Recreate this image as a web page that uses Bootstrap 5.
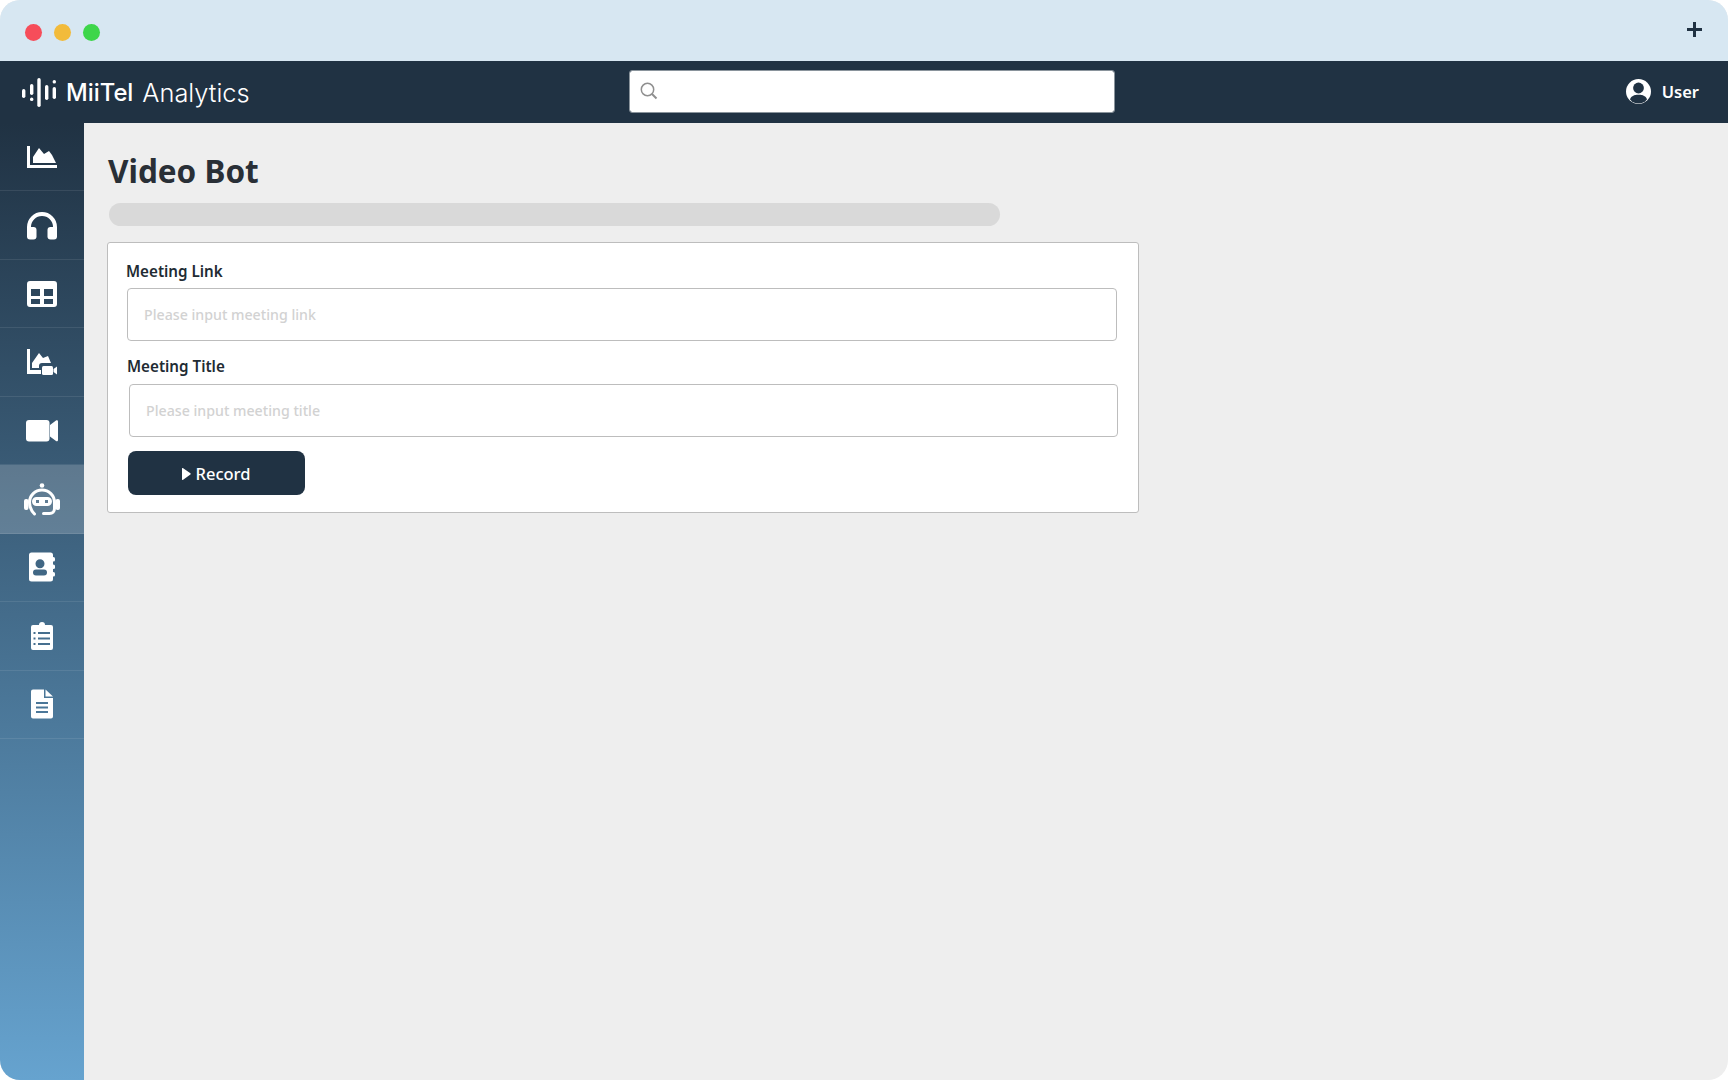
<!doctype html>
<html lang="en">
<head>
    <meta charset="utf-8">
    <meta name="viewport" content="width=device-width, initial-scale=1">
    <title>Video Bot</title>
    <link href="https://cdn.jsdelivr.net/npm/bootstrap@5.3.3/dist/css/bootstrap.min.css" rel="stylesheet">
    <style>
        html, body { height: 100%; background: #fff; }
        body { font-family: "Noto Sans", sans-serif; color: #212b33; overflow: hidden; }
        .app-window { height: 1080px; border-radius: 20px; overflow: hidden; background: #eee; }

        /* browser strip */
        .title-strip { height: 61px; flex: none; background: #d7e7f2; padding: 0 26px 0 25px; }
        .traffic-dot { width: 17px; height: 17px; border-radius: 50%; margin-right: 12px; margin-top: 3px; }
        .dot-red { background: #f64d5a; }
        .dot-yellow { background: #f2bb3b; }
        .dot-green { background: #3dd64a; }
        .strip-plus { margin-top: -3px; }

        /* top bar */
        .top-bar { height: 62px; flex: none; background: #203243; padding: 0 29px 0 22px; }
        .brand-box { width: 607px; color: #fff; font-family: Inter, sans-serif; line-height: 1; }
        .brand-box svg { margin-right: 10px; }
        .brand-miitel { font-size: 23.8px; font-weight: 500; margin-right: 9px; padding-top: 2px; }
        .brand-analytics { font-size: 25.4px; font-weight: 300; padding-top: 2px; }
        .search-box { width: 486px; margin-top: -1px; }
        .search-box .form-control { height: 43px; border-radius: 3px; border: 1px solid #8a949c; padding-left: 38px; }
        .search-icon { position: absolute; left: 11px; top: 12px; }
        .user-icon { margin-top: -1px; }
        .user-name { color: #fff; font-weight: 600; font-size: 16.5px; margin-left: 11px; padding-top: 1px; }

        /* sidebar */
        .side-rail { width: 84px; flex: none; background: linear-gradient(180deg, #203243 0%, #66a3cf 100%); }
        .rail-item { height: 68.44px; border-bottom: 1px solid rgba(255, 255, 255, .09); color: #fff; }
        .rail-item.is-current { background: rgba(255, 255, 255, .19); }

        /* content */
        .page-body { padding: 26px 0 0 23px; }
        .page-heading { font-size: 31.5px; font-weight: 700; line-height: 44px; color: #292f36; margin: 0 0 10px 1px; }
        .skeleton-bar { width: 891px; height: 23px; border-radius: 12px; background: #d9d9d9; margin: 0 0 16px 2px; }
        .form-panel { width: 1032px; height: 271px; background: #fff; border: 1px solid #bdbdbd; border-radius: 3px; padding: 17px 0 0 18px; }
        .field-label { font-size: 15.2px; font-weight: 600; line-height: 22px; margin: 0 0 6px; color: #212b33; }
        .field-input.form-control { width: 990px; height: 53px; margin-left: 1px; font-size: 14.2px; font-weight: 500; padding: 0 16px; border: 1px solid #bdbdbd; border-radius: 4px; }
        .field-input.form-control::placeholder { color: #d2d2d2; }
        .second-field { margin-left: 1px; margin-top: 14px; }
        .second-field .field-label { margin-bottom: 7px; }
        .second-field .field-input.form-control { margin-left: 2px; width: 989px; }
        .btn-record.btn { width: 177px; height: 44px; margin: 14px 0 0 2px; padding: 2px 0 0; background: #203243; border: 0; border-radius: 8px; color: #fff; font-size: 16.5px; font-weight: 500; }
        .btn-record svg { margin-right: 5px; margin-left: -2px; }
    </style>
</head>
<body>
    <div class="app-window d-flex flex-column">
        <div class="title-strip d-flex align-items-center">
            <span class="traffic-dot dot-red"></span>
            <span class="traffic-dot dot-yellow"></span>
            <span class="traffic-dot dot-green"></span>
            <svg class="strip-plus ms-auto" width="15" height="15" viewBox="0 0 15 15"><path fill="#203243" d="M6 0h3v6h6v3H9v6H6V9H0V6h6z"/></svg>
        </div>

        <nav class="top-bar d-flex align-items-center">
            <div class="brand-box d-flex align-items-center">
                <svg width="34" height="29" viewBox="0 0 34 29" fill="#fff">
                    <rect x="0" y="11" width="3.4" height="9" rx="1.7"/>
                    <rect x="8" y="6" width="3.4" height="11" rx="1.7"/>
                    <rect x="8" y="19.5" width="3.4" height="3.6" rx="1.7"/>
                    <rect x="15.3" y="0" width="3.4" height="29" rx="1.7"/>
                    <rect x="23" y="7" width="3.4" height="15" rx="1.7"/>
                    <rect x="30.6" y="2" width="3.4" height="3.6" rx="1.7"/>
                    <rect x="30.6" y="9" width="3.4" height="12" rx="1.7"/>
                </svg>
                <span class="brand-miitel">MiiTel</span><span class="brand-analytics">Analytics</span>
            </div>
            <div class="search-box position-relative">
                <input type="text" class="form-control" aria-label="Search">
                <svg class="search-icon" width="18" height="18" viewBox="0 0 18 18" fill="none" stroke="#8f8f8f" stroke-width="1.5"><circle cx="7.5" cy="7.5" r="6.2"/><path d="M12 12l4.5 4.5" stroke-width="2"/></svg>
            </div>
            <div class="ms-auto d-flex align-items-center">
                <svg class="user-icon" width="25" height="25" viewBox="0 0 25 25">
                    <circle cx="12.5" cy="12.5" r="12.5" fill="#fff"/>
                    <circle cx="12.5" cy="9" r="5.4" fill="#203243"/>
                    <path fill="#203243" d="M4 20.6c1-3.4 4-4.8 8.5-4.8s7.5 1.4 8.5 4.8a11 11 0 0 1-17 0z"/>
                </svg>
                <span class="user-name">User</span>
            </div>
        </nav>

        <div class="d-flex flex-grow-1">
            <aside class="side-rail d-flex flex-column">
                <a class="rail-item d-flex align-items-center justify-content-center" href="#" aria-label="Dashboard">
                    <svg width="36" height="36" viewBox="0 0 36 36" fill="#fff"><path d="M3 7h3v19h27v3H3z"/><path d="M9 24v-6l6-9 5 6 5-3 3 4 4 8z"/></svg>
                </a>
                <a class="rail-item d-flex align-items-center justify-content-center" href="#" aria-label="Calls">
                    <svg width="36" height="36" viewBox="0 0 36 36" fill="#fff"><path d="M5 27v-7a13 13 0 0 1 26 0v7" fill="none" stroke="#fff" stroke-width="4"/><rect x="3" y="20" width="9.5" height="12.5" rx="3"/><rect x="23.5" y="20" width="9.5" height="12.5" rx="3"/></svg>
                </a>
                <a class="rail-item d-flex align-items-center justify-content-center" href="#" aria-label="Tables">
                    <svg width="36" height="36" viewBox="0 0 36 36" fill="#fff"><path fill-rule="evenodd" d="M6 5h24a3 3 0 0 1 3 3v20a3 3 0 0 1-3 3H6a3 3 0 0 1-3-3V8a3 3 0 0 1 3-3zM7 13v7h9v-7zM20 13v7h9v-7zM7 23v5h9v-5zM20 23v5h9v-5z"/></svg>
                </a>
                <a class="rail-item d-flex align-items-center justify-content-center" href="#" aria-label="Video analytics">
                    <svg width="36" height="36" viewBox="0 0 36 36" fill="#fff"><path d="M3 5h3v21h11v4H3z"/><path d="M8 24v-5l7-10 4 5 5-2 3 7h-9a3 3 0 0 0-3 3v2z"/><rect x="18" y="22" width="11" height="9" rx="1.5"/><path d="M29.5 25l3.5-2.5v8L29.5 28z"/></svg>
                </a>
                <a class="rail-item d-flex align-items-center justify-content-center" href="#" aria-label="Video">
                    <svg width="36" height="36" viewBox="0 0 36 36" fill="#fff"><rect x="2" y="8" width="23.5" height="21.5" rx="3"/><path d="M26 13l6-4.500c.8-.6 2-.2 2 1v18.500c0 1.200-1.200 1.600-2 1l-6-4.500z"/></svg>
                </a>
                <a class="rail-item is-current d-flex align-items-center justify-content-center" href="#" aria-label="Video bot">
                    <svg width="36" height="36" viewBox="0 0 36 36" fill="#fff">
                        <circle cx="18" cy="4.5" r="2.3"/>
                        <path d="M10.5 33C7 29.5 5.5 25.5 5.5 21.5a12.500 12.500 0 0 1 25 0v6c0 3-2 5-5 5h-6" fill="none" stroke="#fff" stroke-width="3" stroke-linecap="round"/>
                        <rect x="0" y="18" width="4.5" height="11" rx="2"/>
                        <rect x="31.5" y="18" width="4.5" height="11" rx="2"/>
                        <path fill-rule="evenodd" d="M12.500 16h11a4.500 4.500 0 0 1 0 9h-11a4.500 4.500 0 0 1 0-9zM12 19v3h3v-3zM21 19v3h3v-3z"/>
                    </svg>
                </a>
                <a class="rail-item d-flex align-items-center justify-content-center" href="#" aria-label="Contacts">
                    <svg width="36" height="36" viewBox="0 0 36 36" fill="#fff">
                        <path fill-rule="evenodd" d="M7.500 3.500h19a2.500 2.500 0 0 1 2.500 2.500v24a2.500 2.500 0 0 1-2.500 2.500h-19A2.500 2.500 0 0 1 5 30V6a2.500 2.500 0 0 1 2.500-2.500zM16 10.300a4.500 4.500 0 1 0 0 9 4.500 4.500 0 0 0 0-9zM12 20.500a3 3 0 0 0 0 6h8a3 3 0 0 0 0-6z"/>
                        <rect x="28" y="8" width="3" height="4.5" rx="1.5"/><rect x="28" y="15.500" width="3" height="4.5" rx="1.5"/><rect x="28" y="23" width="3" height="4.5" rx="1.5"/>
                    </svg>
                </a>
                <a class="rail-item d-flex align-items-center justify-content-center" href="#" aria-label="Tasks">
                    <svg width="36" height="36" viewBox="0 0 36 36" fill="#fff">
                        <path fill-rule="evenodd" d="M15 7a3 3 0 0 1 6 0h6a2 2 0 0 1 2 2v21a2 2 0 0 1-2 2H9a2 2 0 0 1-2-2V9a2 2 0 0 1 2-2zM9.500 14v2h2v-2zM14 14v2h12v-2zM9.500 19.500v2h2v-2zM14 19.500v2h12v-2zM9.500 25v2h2v-2zM14 25v2h12v-2z"/>
                    </svg>
                </a>
                <a class="rail-item d-flex align-items-center justify-content-center" href="#" aria-label="Documents">
                    <svg width="36" height="36" viewBox="0 0 36 36" fill="#fff">
                        <path fill-rule="evenodd" d="M9 3.500h11v8.500h9v18.500a2 2 0 0 1-2 2H9a2 2 0 0 1-2-2v-25a2 2 0 0 1 2-2zM12 16v2h12v-2zM12 20.500v2h12v-2zM12 25v2h12v-2z"/>
                        <path d="M21.500 3.500l7.500 7h-7.500z"/>
                    </svg>
                </a>
            </aside>

            <main class="page-body flex-grow-1">
                <h1 class="page-heading">Video Bot</h1>
                <div class="skeleton-bar"></div>
                <form class="form-panel">
                    <label class="field-label d-block" for="meetingLink">Meeting Link</label>
                    <input type="text" class="form-control field-input" id="meetingLink" placeholder="Please input meeting link">
                    <div class="second-field">
                        <label class="field-label d-block" for="meetingTitle">Meeting Title</label>
                        <input type="text" class="form-control field-input" id="meetingTitle" placeholder="Please input meeting title">
                    </div>
                    <button type="button" class="btn btn-record d-flex align-items-center justify-content-center">
                        <svg width="10" height="12" viewBox="0 0 10 12" fill="#fff"><path d="M1 .5c0-.4.4-.6.8-.4l7.600 5.200c.4.3.4.900 0 1.200L1.800 11.900c-.4.200-.8 0-.8-.4z"/></svg>
                        Record
                    </button>
                </form>
            </main>
        </div>
    </div>

    <script src="https://cdn.jsdelivr.net/npm/bootstrap@5.3.3/dist/js/bootstrap.bundle.min.js"></script>
</body>
</html>
